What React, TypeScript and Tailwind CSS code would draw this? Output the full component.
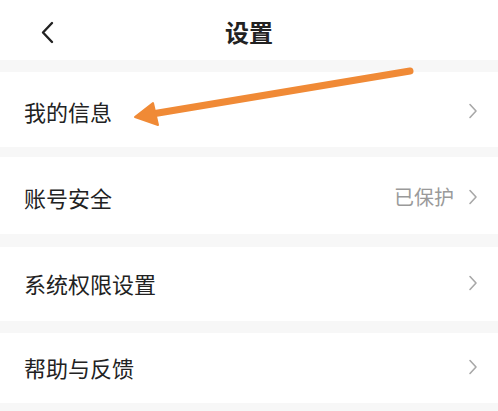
import React from "react";

const rows = [
  { label: "我的信息", h: "h-[75px]", sep: "h-[10px]", shift: "mt-[2px]" },
  { label: "账号安全", extra: "已保护", h: "h-[77px]", sep: "h-[13px]", shift: "mt-[2px]" },
  { label: "系统权限设置", h: "h-[74px]", sep: "h-[12px]", shift: "-mt-[2px]" },
  { label: "帮助与反馈", h: "h-[70px]", sep: "h-[10px]", shift: "-mt-[2px]" },
];

function Chevron() {
  return (
    <svg width="10" height="16" viewBox="0 0 10 16" fill="none">
      <path d="M2 1.5L8 8L2 14.5" stroke="#a8a8a8" strokeWidth="1.6" strokeLinecap="round" strokeLinejoin="round" />
    </svg>
  );
}

export default function App() {
  return (
    <div
      className="relative w-[498px] h-[411px] overflow-hidden bg-white text-[#222]"
      style={{ fontFamily: '"Noto Sans CJK SC", "Noto Sans", sans-serif' }}
    >
      {/* Header */}
      <header className="relative h-[60px] flex items-center justify-center">
        <button className="absolute left-[35px] top-[17px] p-1">
          <svg width="16" height="24" viewBox="0 0 16 24" fill="none">
            <path d="M13 2L4 11.5L13 21" stroke="#222" strokeWidth="2.4" strokeLinecap="round" strokeLinejoin="round" />
          </svg>
        </button>
        <h1 className="text-[24px] font-bold leading-none mt-[4px]">设置</h1>
      </header>
      <div className="h-[12px] bg-[#f7f7f7]" />

      {rows.map((row) => (
        <div key={row.label}>
          <div className={`${row.h} flex items-center justify-between pl-[24px] pr-[20px]`}>
            <span className={`text-[22px] leading-none ${row.shift}`}>{row.label}</span>
            <div className={`flex items-center gap-[14px] ${row.shift}`}>
              {row.extra && <span className="text-[20px] text-[#9a9a9a] leading-none">{row.extra}</span>}
              <Chevron />
            </div>
          </div>
          <div className={`${row.sep} bg-[#f7f7f7]`} />
        </div>
      ))}
      <div className="h-[20px] bg-[#f7f7f7]" />

      {/* annotation arrow */}
      <svg className="absolute left-0 top-0 pointer-events-none" width="498" height="411" viewBox="0 0 498 411">
        <path d="M410 71L152 114" stroke="#f08a36" strokeWidth="7" strokeLinecap="round" />
        <path d="M135 117L153 103L158 125Z" fill="#f08a36" stroke="#f08a36" strokeWidth="2" strokeLinejoin="round" />
      </svg>
    </div>
  );
}
